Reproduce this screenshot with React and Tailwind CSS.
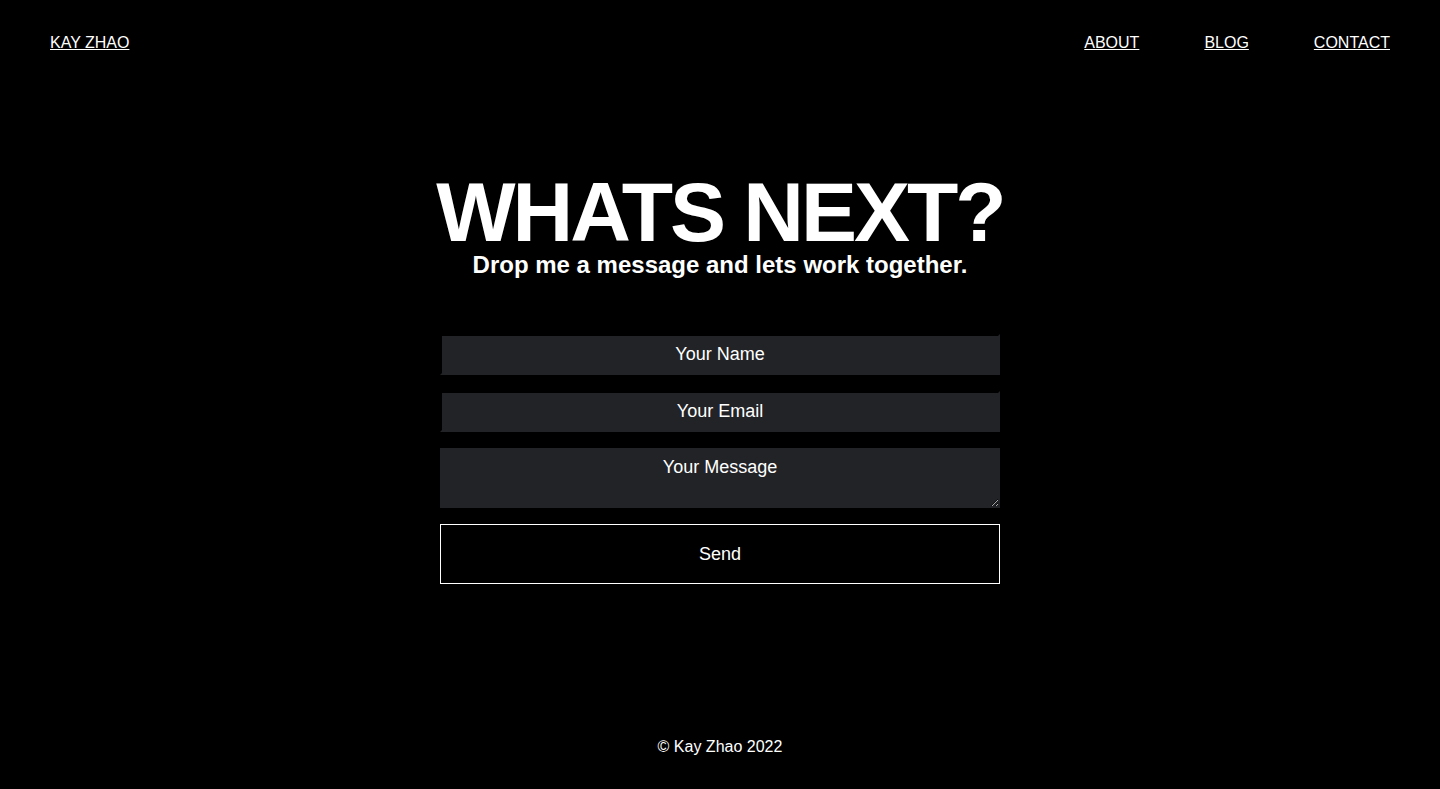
export default function App() {
  return (
    <div
      className="h-screen bg-black text-white flex flex-col overflow-hidden"
      style={{ fontFamily: '"Liberation Sans", Arial, Helvetica, sans-serif' }}
    >
      <header className="flex justify-between items-start px-[50px] pt-[34px] text-base leading-[18px]">
        <a href="#" className="underline">KAY ZHAO</a>
        <nav className="flex gap-[65px]">
          <a href="#" className="underline">ABOUT</a>
          <a href="#" className="underline">BLOG</a>
          <a href="#" className="underline">CONTACT</a>
        </nav>
      </header>

      <main className="flex-1 flex flex-col items-center pt-[119px]">
        <h1 className="text-[84px] leading-[82px] font-bold tracking-[-3px] text-center">
          WHATS NEXT?
        </h1>
        <p className="text-[24px] leading-[24px] font-bold text-center">
          Drop me a message and lets work together.
        </p>

        <form className="mt-[57px] w-[560px] flex flex-col gap-4 text-[18px]">
          <input
            type="text"
            placeholder="Your Name"
            className="h-[41px] w-full border-2 border-t-black border-l-black border-r-[#222327] border-b-[#222327] bg-[#222327] text-center text-white placeholder:text-white outline-none"
          />
          <input
            type="email"
            placeholder="Your Email"
            className="h-[41px] w-full border-2 border-t-black border-l-black border-r-[#222327] border-b-[#222327] bg-[#222327] text-center text-white placeholder:text-white outline-none"
          />
          <textarea
            placeholder="Your Message"
            className="h-[60px] w-full border border-[#222327] bg-[#222327] text-center text-white placeholder:text-white pt-[8px] leading-[20px] outline-none"
          />
          <button
            type="button"
            className="h-[60px] w-full border border-white bg-black text-white text-[18px]"
          >
            Send
          </button>
        </form>
      </main>

      <footer className="pb-[33px] text-center text-base leading-[18px]">
        © Kay Zhao 2022
      </footer>
    </div>
  );
}
